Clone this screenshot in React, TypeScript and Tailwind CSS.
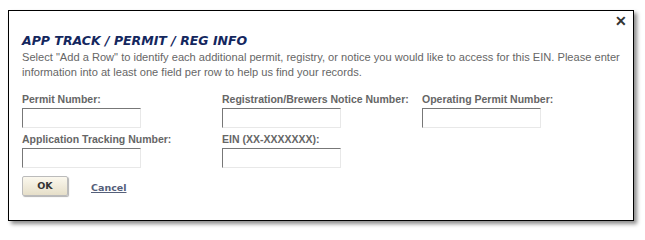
import React from "react";

const fields = [
  { label: "Permit Number:" },
  { label: "Registration/Brewers Notice Number:" },
  { label: "Operating Permit Number:" },
  { label: "Application Tracking Number:" },
  { label: "EIN (XX-XXXXXXX):" },
];

const Field: React.FC<{ label: string }> = ({ label }) => (
  <div className="flex flex-col">
    <label className="text-[10.5px] leading-[13px] font-bold text-[#666] whitespace-nowrap">
      {label}
    </label>
    <input
      type="text"
      className="mt-[2px] w-[119px] h-[20px] bg-white border border-t-[#777] border-l-[#777] border-r-[#e8e8e8] border-b-[#e8e8e8] outline-none"
    />
  </div>
);

export default function App(): JSX.Element {
  return (
    <div className="w-[645px] h-[233px] bg-white pt-[10px] pl-[8px] font-['Liberation_Sans',Arial,sans-serif]">
      <div className="relative w-[626px] h-[211px] bg-white border border-black shadow-[3px_3px_4px_rgba(0,0,0,0.45)] pl-[13px] pr-[5px] pt-[22px]">
        <button className="absolute right-[6px] top-[3px] text-[14px] font-bold text-[#333] leading-none">
          ✕
        </button>
        <h2 className="font-['DejaVu_Sans',Verdana,sans-serif] italic font-bold text-[12.5px] leading-[15px] text-[#14275e]">
          APP TRACK / PERMIT / REG INFO
        </h2>
        <p className="mt-[2px] text-[11.1px] leading-[15px] text-[#666]">
          Select "Add a Row" to identify each additional permit, registry, or
          notice you would like to access for this EIN. Please enter
          information into at least one field per row to help us find your
          records.
        </p>
        <div className="mt-[13px] grid grid-cols-[200px_200px_200px] gap-y-[5px]">
          {fields.map((f, i) => (
            <Field key={i} label={f.label} />
          ))}
        </div>
        <div className="mt-[8px] flex items-center gap-[23px]">
          <button className="w-[46px] h-[20px] rounded-[2px] border border-[#bbb] bg-gradient-to-b from-[#fbf8ee] to-[#e6dfc9] shadow-[1px_1px_1px_rgba(0,0,0,0.3)] font-['DejaVu_Sans',Verdana,sans-serif] font-bold text-[9.5px] text-[#333]">
            OK
          </button>
          <a
            href="#"
            className="font-['DejaVu_Sans',Verdana,sans-serif] font-bold text-[9.5px] text-[#55607a] underline mt-[5px]"
          >
            Cancel
          </a>
        </div>
      </div>
    </div>
  );
}
